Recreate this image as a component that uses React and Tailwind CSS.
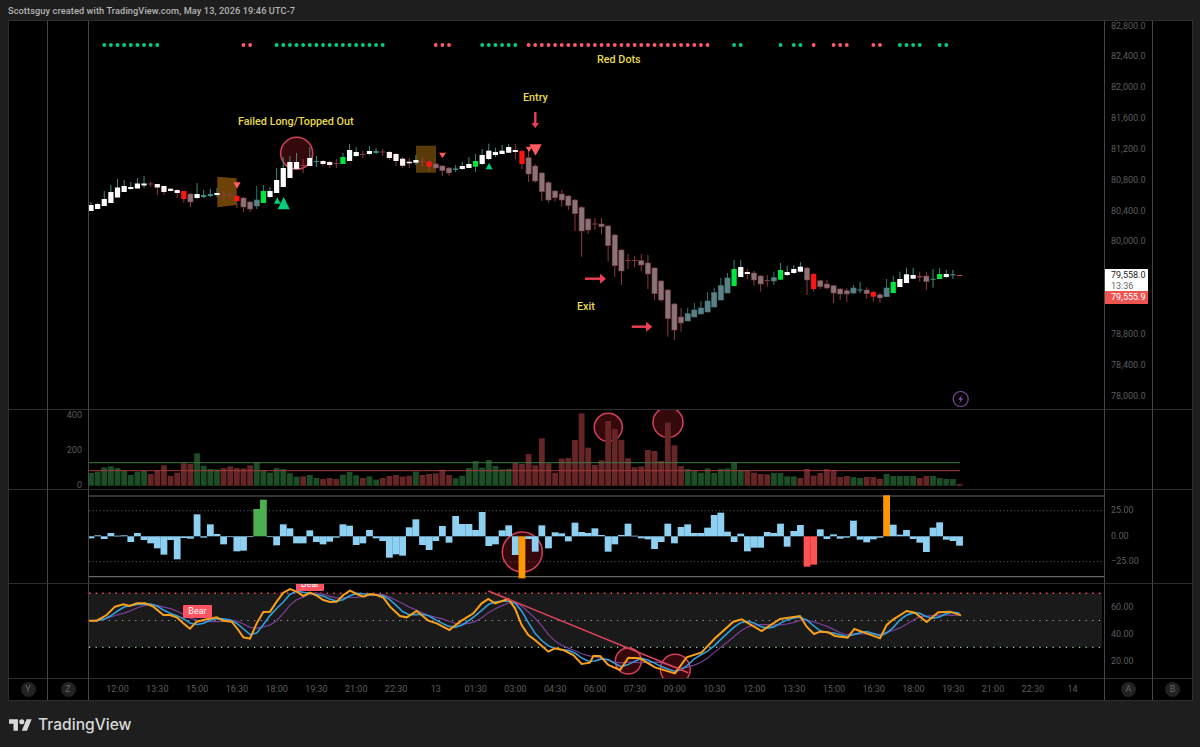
import React from "react";

const BAR = 6.63;
const barX = (i) => 91 + BAR * i;

// wick top, body top, body bottom, wick bottom, style
const candles = [
  [202,205,211,211,"W"],[203,204,209,209,"W"],[191,199,206,206,"W"],[185,192,203,203,"W"],[179,187.5,197.5,197.5,"W"],
  [180,186,192,192,"W"],[182,187,189,190,"W"],[178,183.5,188.5,188.5,"W"],[176,183.5,185.5,188,"W"],[182,183.5,184.5,187,"x"],
  [184,184,187.5,195,"w"],[186,186,192,195,"w"],[188.7,188.7,191,191.5,"w"],[189,190,193,198,"w"],[191,191,199,203,"R"],
  [193,194,202,207,"g"],[183,194,198,199,"W"],[190,195,197,198,"t"],[189,194,196,197,"t"],[188,193,195,197,"W"],
  [190,194,195,200,"x"],[192,195,196,199,"x"],[195,196,201,208,"R"],[197,198,207,212,"g"],[201,202,209,212,"g"],
  [186,200,206,209,"s"],[185,191,203,203,"G"],[187,191,197,198,"W"],[168,180,193,193,"W"],[157,168,187,187,"W"],
  [156,162,178,178,"W"],[153,162,169,170,"W"],[159,165,166,173,"x"],[147,158,166,166,"W"],[156,161,162,167,"t"],
  [160,161,164,166,"w"],[161,162,165,168,"w"],[159,163,164,168,"x"],[153,157,164,164,"G"],[144,150,161,161,"W"],
  [147,152,156,157,"W"],[151,154,155,158,"x"],[146,151,154,155,"W"],[148,151,153,154,"t"],[149,151.5,152.5,156,"x"],
  [151,152,158,160,"w"],[153,154,161,166,"w"],[157,158.7,165.7,167.7,"w"],[158,161.7,163.3,168,"w"],[155,160,162.7,165,"W"],
  [158,161,162,167,"x"],[160,161.7,166.7,170.7,"R"],[163,164,168,169,"g"],[165,166,170.7,175.7,"g"],[167,168,173,175.7,"g"],
  [165,168.5,170,172,"t"],[162,166,169,170,"W"],[157,164,168,168,"W"],[154,161,166.7,172,"G"],[149,155,164,165,"W"],
  [143.7,150.7,159,160,"W"],[147.7,152,155,157,"W"],[145,150.7,154,154,"W"],[144,147,152.7,153,"W"],[144,150,152,159,"w"],
  [150,151,164,169,"R"],[147,157.7,174,182,"g"],[164,166,181,182.7,"g"],[172,173,191.7,201,"g"],[181,182.7,200,202.7,"g"],
  [190,191,197.7,201.7,"g"],[190,194,200,206.7,"g"],[195,196,205.7,210,"g"],[199,200,213.7,231,"g"],[206,207.3,231,256.7,"g"],
  [218,219,230,234,"g"],[218,223.5,224.5,230,"x"],[218,224,226.7,234,"g"],[225,226,245.7,261.7,"g"],[234,235,265.7,276.7,"g"],
  [249,250,271,285,"g"],[254,260,261,269,"x"],[255.7,260,261,267.3,"x"],[254,260.7,265,271.3,"g"],[255,263,274,289,"g"],
  [267,268,293.7,300,"g"],[280,281,300,301.7,"g"],[289,290,318.7,336.7,"g"],[303,304,330,340,"g"],[308,317,323,331.7,"g"],
  [307.7,313.7,321,321,"s"],[303,310,317,317,"s"],[301,308,314,314,"s"],[292,301,312,312,"s"],[288,292.7,307,307,"s"],
  [278,285.7,300,300,"s"],[273,278,293,293,"s"],[260,269,286,286,"G"],[260,267,277,277,"W"],[269,272,274,279,"w"],
  [271,273,280,285.7,"g"],[275,276,284,291.7,"g"],[275,280,281,286.7,"x"],[271.7,277.7,281,285,"s"],[263,270,279.7,279.7,"G"],
  [265.7,272,275,276,"W"],[265,269,273,274,"W"],[262,266.7,271.7,272,"W"],[267,268,280,295,"g"],[273,274,289,291.7,"R"],
  [280,280.7,286.7,289,"g"],[280,284,288,289,"g"],[285,285.7,293,303,"g"],[288,289,294,300,"g"],[288.3,290.7,294,302,"g"],
  [285,288,293,294,"s"],[282,289.5,290.5,293,"t"],[287.3,290,293.7,299,"g"],[291,292,296.7,301.7,"R"],[293,294.7,298,303,"g"],
  [279,288,296.7,297,"s"],[275.7,282,293,293,"G"],[271.7,279,287,287,"W"],[267.7,274.3,283,283,"W"],[267.7,275,278.7,279,"W"],
  [271.7,276,277.5,281.7,"x"],[271.7,276,281.7,290,"g"],[269,278.8,279.8,287.7,"t"],[268,274,279,279,"G"],[270,274,277,278,"W"],
  [270,274.2,275.4,279,"t"],[275,275,276,276,"d"],
];

const candleStyle = {
  W: { body: "#ffffff", wick: "#3f8a80" },
  w: { body: "#fff0f0", wick: "#8c3a40" },
  R: { body: "#ff1414", wick: "#8c3a40" },
  G: { body: "#00e63c", wick: "#2f8a70" },
  g: { body: "#8a7478", wick: "#8c3a40", edge: "#7a3a40" },
  s: { body: "#5f7f88", wick: "#2f7a72", edge: "#3f7a78" },
  x: { body: "#8c3a40", wick: "#8c3a40" },
  t: { body: "#3f8f85", wick: "#3f8f85" },
  d: { body: "#e04050", wick: "#e04050" },
};

const greenDots = [2,3,4,5,6,7,8,9,10,28,29,30,31,32,33,34,35,36,37,38,39,40,41,42,43,44,59,60,61,62,63,64,97,98,104,106,107,122,123,124,125,128,129];
const redDots = [23,24,52,53,54,109,112,113,114,118,119,...Array.from({ length: 28 }, (_, i) => 66 + i)];

// volume tops, in 3x zoom units above y=405
const volTops = [204,200,187,184,189,198,210,200,198,207,196,181,212,203,175,177,145,182,192,193,189,184,189,190,181,173,196,203,189,192,205,215,214,210,219,222,219,222,209,201,211,219,214,224,219,213,210,
  215,212,200,210,207,205,194,210,220,212,189,168,188,165,183,193,191,174,177,147,181,100,175,203,161,159,105,25,128,180,166,48,72,105,160,187,184,135,138,168,53,121,183,192,196,203,190,204,192,190,172,195,195,203,207,208,204,204,214,214,
  219,192,212,204,192,195,216,213,216,219,216,216,221,207,213,213,213,213,219,213,213,219,222,222,237];
const volGreen = new Set([0,1,2,3,4,5,6,7,8,16,17,18,19,25,26,27,28,29,30,31,33,34,38,39,40,42,43,49,55,56,57,58,59,60,61,62,63,90,91,92,93,94,95,96,97,98,103,104,105,106,115,116,120,121,122,123,124,127,128,129,130]);

// histogram tips, in 3x zoom units above y=405
const histTips = [400,391,402,384,392,391,411,384,405,415,430,449,405,463,399,401,328,398,358,387,418,396,439,437,394,312,284,394,421,358,370,415,415,376,411,418,410,398,358,362,420,415,375,400,408,458,448,
  452,367,343,420,435,408,363,413,333,357,357,375,321,423,418,376,361,450,520,402,440,361,430,382,385,409,353,381,384,370,390,440,418,390,356,392,400,403,432,411,356,415,366,358,384,384,368,330,323,380,411,386,439,428,428,381,384,356,425,378,
  360,485,479,373,402,388,401,398,347,404,412,403,398,271,359,389,375,402,413,441,368,352,404,408,422];
const histColor = (i) => {
  if (i === 65 || i === 120) return "#ff9800";
  if (i === 25 || i === 26) return "#4caf50";
  if (i === 108 || i === 109) return "#ff5252";
  return "#8dd0f2";
};

// fast oscillator line traced from the picture
const fastLine = [
  ...[[265,122],[290,122],[320,105],[345,80],[370,73],[390,78],[410,70],[435,70],[460,80],[490,105],[510,105],[530,112],[550,130],[570,146],[590,125],[620,118],[650,112],[670,122],[695,125],[715,150],[730,172],[750,176],[770,130],[790,96],[810,95],[830,65],[850,38],[870,27],[890,35],[910,48],[930,38],[950,47],[970,60],[990,66],[1010,65],[1030,45],[1050,32],[1070,42],[1090,50],[1110,42],[1130,45],[1150,53],[1170,80]].map(([x, y]) => [x / 3, 580 + y / 3]),
  ...[[0,108],[20,112],[50,93],[85,122],[110,130],[148,150],[180,125],[220,100],[245,70],[265,57],[285,70],[325,57],[345,85],[365,135],[385,165],[405,180],[445,215],[465,205],[490,210],[520,225],[545,252],[570,248],[580,228],[600,228],[625,255],[660,270],[685,233],[720,235],[765,262],[825,280],[860,232],[905,217],[945,175],[1000,125],[1025,118],[1085,153],[1140,117]].map(([x, y]) => [400 + x / 3, 580 + y / 3]),
  ...[[0,378],[20,410],[42,432],[60,425],[85,427],[105,438],[143,443],[163,417],[200,430],[240,445],[260,405],[280,388],[320,363],[345,368],[380,396],[415,367],[450,365],[483,376]].map(([x, y]) => [800 + x / 3, 490 + y / 3]),
];

const yAt = (x) => {
  for (let i = 1; i < fastLine.length; i++) {
    const [x0, y0] = fastLine[i - 1];
    const [x1, y1] = fastLine[i];
    if (x <= x1) return y0 + ((y1 - y0) * (x - x0)) / (x1 - x0 || 1);
  }
  return fastLine[fastLine.length - 1][1];
};

const sampled = candles.map((_, i) => yAt(barX(i)));
const smooth = (n) =>
  sampled.map((_, i) => {
    const from = Math.max(0, i - n + 1);
    const part = sampled.slice(from, i + 1);
    return part.reduce((a, b) => a + b, 0) / part.length;
  });
const toPoints = (ys) => ys.map((y, i) => `${barX(i).toFixed(1)},${y.toFixed(1)}`).join(" ");

const times = ["12:00","13:30","15:00","16:30","18:00","19:30","21:00","22:30","13","01:30","03:00","04:30","06:00","07:30","09:00","10:30","12:00","13:30","15:00","16:30","18:00","19:30","21:00","22:30","14"];
// 79,600 and 79,200 sit hidden behind the price tag
const prices = ["82,800.0","82,400.0","82,000.0","81,600.0","81,200.0","80,800.0","80,400.0","80,000.0","","","78,800.0","78,400.0","78,000.0"];

const Ring = ({ cx, cy, r }) => (
  <circle cx={cx} cy={cy} r={r} fill="#8c141e" fillOpacity="0.38" stroke="#d2405a" strokeWidth="1.5" />
);

const Tri = ({ points, fill }) => <polygon points={points} fill={fill} />;

const Arrow = ({ x1, y1, x2, y2, head }) => (
  <g stroke="#ef3f58" fill="#ef3f58">
    <line x1={x1} y1={y1} x2={x2} y2={y2} strokeWidth="2.4" />
    <polygon points={head} stroke="none" />
  </g>
);

const PriceChart = () => (
  <svg viewBox="89 21 1015 388" className="block w-full h-full">
    <polygon points="217.3,176.7 236.7,178.3 236.7,205 217.3,207.3" fill="#6b4208" />
    <rect x="416" y="145.7" width="20" height="27" fill="#5a3a08" />
    <Ring cx={296.7} cy={153.3} r={16} />
    {greenDots.map((i) => (
      <circle key={i} cx={barX(i)} cy="45" r="1.9" fill="#00d080" />
    ))}
    {redDots.map((i) => (
      <circle key={i} cx={barX(i)} cy="45" r="1.9" fill="#ff5a6a" />
    ))}
    {candles.map(([hi, top, bottom, lo, kind], i) => {
      const s = candleStyle[kind];
      const x = barX(i);
      return (
        <g key={i}>
          <line x1={x} x2={x} y1={hi} y2={lo} stroke={s.wick} strokeWidth="1" />
          <rect x={x - 2.6} y={top} width="5.2" height={Math.max(bottom - top, 1)} fill={s.body} stroke={s.edge} strokeWidth={s.edge ? 0.6 : 0} />
        </g>
      );
    })}
    <Tri points="233.3,182.3 240.7,182.3 237,188.7" fill="#ff5a5f" />
    <Tri points="274,203.7 280.7,203.7 277.3,197.3" fill="#00d07a" />
    <Tri points="277.7,209.3 289.7,209.3 283.7,197" fill="#00d07a" />
    <Tri points="439,152.7 446,152.7 442.5,158" fill="#ff5a5f" />
    <Tri points="485.7,169.3 492.7,169.3 489,163" fill="#00d07a" />
    <Tri points="525.7,146.7 532.3,146.7 529,152" fill="#ff5a5f" />
    <Tri points="529.3,144.3 541.7,144.3 535.5,155.7" fill="#ff5a5f" />
    <Arrow x1={535.3} y1={112} x2={535.3} y2={124} head="531.5,123 539,123 535.3,128" />
    <Arrow x1={585} y1={278.7} x2={601} y2={278.7} head="600,273.7 606,278.7 600,283.7" />
    <Arrow x1={631.7} y1={326.7} x2={647} y2={326.7} head="646,321.7 652.3,326.7 646,331.7" />
    <circle cx="960.7" cy="399" r="7.5" fill="none" stroke="#7d4a9c" strokeWidth="1.2" />
    <path d="M962.5 394.5 L958 399.8 L960.5 399.8 L959 403.5 L963.5 398.2 L961 398.2 Z" fill="#7d4a9c" />
  </svg>
);

const VolumeChart = () => (
  <svg viewBox="89 410 1015 79" className="block w-full h-full">
    <Ring cx={608.3} cy={427.3} r={14} />
    <Ring cx={668} cy={422.3} r={15} />
    {volTops.map((z, i) => {
      const y = 405 + z / 3;
      return (
        <rect key={i} x={barX(i) - 2.9} y={y} width="5.8" height={485.7 - y} fill={volGreen.has(i) ? "#1c4d26" : "#662527"} />
      );
    })}
    <line x1="89" x2="960" y1="462.7" y2="462.7" stroke="#3d7a45" />
    <line x1="89" x2="960" y1="470.7" y2="470.7" stroke="#a83a3c" />
  </svg>
);

const HistChart = () => (
  <svg viewBox="89 490 1015 93" className="block w-full h-full">
    <line x1="89" x2="1104" y1="496" y2="496" stroke="#666" strokeWidth="1.2" />
    <line x1="89" x2="1104" y1="576.7" y2="576.7" stroke="#666" strokeWidth="1.2" />
    <line x1="89" x2="1104" y1="510.7" y2="510.7" stroke="#666" strokeDasharray="1 2.6" />
    <line x1="89" x2="1104" y1="561.7" y2="561.7" stroke="#666" strokeDasharray="1 2.6" />
    <Ring cx={522.3} cy={552} r={20} />
    {histTips.map((z, i) => {
      const y = 405 + z / 3;
      const zero = 536.3;
      return (
        <rect key={i} x={barX(i) - 3.4} y={Math.min(y, zero)} width="6.8" height={Math.max(Math.abs(y - zero), 0.8)} fill={histColor(i)} />
      );
    })}
  </svg>
);

const OscChart = () => (
  <svg viewBox="89 584 1015 94" className="block w-full h-full">
    <rect x="89" y="593.3" width="1013" height="54" fill="#1a1a1a" />
    <line x1="89" x2="1102" y1="593.3" y2="593.3" stroke="#f04a62" strokeWidth="1.6" strokeDasharray="1.6 5" />
    <line x1="89" x2="1102" y1="620.5" y2="620.5" stroke="#a8a8a8" strokeWidth="1.2" strokeDasharray="1.2 5.4" />
    <line x1="89" x2="1102" y1="647.3" y2="647.3" stroke="#a8d8a8" strokeWidth="1.2" strokeDasharray="1.2 5.4" />
    <Ring cx={628.3} cy={661} r={13} />
    <Ring cx={675.3} cy={669.3} r={15} />
    <polyline points={toPoints(smooth(6))} fill="none" stroke="#7b3f98" strokeWidth="1.2" />
    <polyline points={toPoints(smooth(3))} fill="none" stroke="#2f9fe0" strokeWidth="1.6" />
    <polyline points={fastLine.map((p) => p.join(",")).join(" ")} fill="none" stroke="#f9a01b" strokeWidth="2" />
    <line x1="488.3" y1="591" x2="688.3" y2="672.7" stroke="#e0435a" strokeWidth="1.5" />
  </svg>
);

const note = "absolute text-[10.8px] font-medium leading-none text-[#e6d94c] whitespace-nowrap";
const axis = "text-[9px] text-[#5c5c5c] leading-none";
const colLine = "border-r border-r-[#47474b]";
const rowLine = "border-b border-b-[#2c2c32]";

const Round = ({ label }) => (
  <span className="flex items-center justify-center w-[15px] h-[15px] rounded-full bg-[#222222] text-[9px] text-[#666666]">
    {label}
  </span>
);

const Row = ({ second, children, right }) => (
  <>
    <div className={`${colLine} ${rowLine}`} />
    <div className={`${colLine} ${rowLine} overflow-hidden`}>{second}</div>
    <div className={`${colLine} ${rowLine} relative overflow-hidden`}>{children}</div>
    <div className={`${colLine} ${rowLine} relative`}>{right}</div>
    <div className={rowLine} />
  </>
);

const AxisStack = ({ labels, step, className }) => (
  <div className={`flex flex-col pl-[6px] ${className}`}>
    {labels.map((t, i) => (
      <div key={i} className={`flex items-center ${axis}`} style={{ height: step }}>
        {t}
      </div>
    ))}
  </div>
);

export default function App() {
  return (
    <div className="w-[1200px] h-[747px] flex flex-col bg-[#1e1e1e] overflow-hidden font-['Roboto',sans-serif]">
      <div className="h-5 pl-2 pt-[1px] flex items-center text-[9.2px] tracking-[0.1px] font-medium text-[#b4b4b4] whitespace-nowrap">
        Scottsguy created with TradingView.com, May 13, 2026 19:46 UTC-7
      </div>

      <div className="ml-2 w-[1185px] h-[681px] bg-black border border-[#2e2e2e] grid grid-cols-[39px_41px_1016px_48px_39px] grid-rows-[389px_80px_94px_95px_21px]">
        <Row
          right={
            <>
              <AxisStack labels={prices} step={30.85} className="-mt-[10.4px]" />
              <div className="absolute left-0 top-[248px] w-[43px] flex flex-col">
                <div className="h-[22px] bg-white pl-[6px] pt-[2px] flex flex-col gap-[2px] text-[9px] leading-[9px]">
                  <span className="text-[#222222]">79,558.0</span>
                  <span className="text-[#666666]">13:36</span>
                </div>
                <div className="h-[13px] bg-[#ef5350] pl-[6px] flex items-center text-[9px] text-white">79,555.9</div>
              </div>
            </>
          }
        >
          <PriceChart />
          <span className={`${note} left-[149px] top-[96px]`}>Failed Long/Topped Out</span>
          <span className={`${note} left-[508px] top-[34px]`}>Red Dots</span>
          <span className={`${note} left-[434px] top-[72px]`}>Entry</span>
          <span className={`${note} left-[488px] top-[281px]`}>Exit</span>
        </Row>

        <Row
          second={
            <div className={`flex flex-col items-end pr-[6px] -mt-[12.5px] ${axis}`}>
              {["400", "200", "0"].map((t) => (
                <div key={t} className="h-[35px] flex items-center">{t}</div>
              ))}
            </div>
          }
        >
          <VolumeChart />
        </Row>

        <Row right={<AxisStack labels={["25.00", "0.00", "−25.00"]} step={25.5} className="pt-[8px]" />}>
          <HistChart />
        </Row>

        <Row right={<AxisStack labels={["60.00", "40.00", "20.00"]} step={27.1} className="pt-[10px]" />}>
          <OscChart />
          <span className="absolute left-[94px] top-[21px] h-[13px] w-[29px] rounded-[1px] bg-[#ff5263] text-white text-[9px] flex items-center justify-center">Bear</span>
          <span className="absolute left-[207px] -top-[6px] h-[13px] w-[28px] rounded-[1px] bg-[#ff5263] text-white text-[9px] flex items-center justify-center">Bear</span>
        </Row>

        <div className={`${colLine} flex items-center justify-center`}><Round label="Y" /></div>
        <div className={`${colLine} flex items-center justify-center`}><Round label="Z" /></div>
        <div className={`${colLine} flex items-center pl-[8.6px] ${axis}`}>
          {times.map((t, i) => (
            <span key={i} className="w-[39.8px] shrink-0 text-center">{t}</span>
          ))}
        </div>
        <div className={`${colLine} flex items-center justify-center`}><Round label="A" /></div>
        <div className="flex items-center justify-center"><Round label="B" /></div>
      </div>

      <div className="pl-[9px] pt-[16px] flex items-center gap-[6px] text-[#d8d8d8]">
        <svg viewBox="0 4 36 18" className="w-[23px] h-[12px]" fill="#d8d8d8">
          <path d="M14 22H7V11H0V4h14v18zM28 22h-8l7.5-18h8L28 22z" />
          <circle cx="20" cy="8" r="4" />
        </svg>
        <span className="text-[15.6px] leading-none font-medium font-['Inter',sans-serif]">TradingView</span>
      </div>
    </div>
  );
}
